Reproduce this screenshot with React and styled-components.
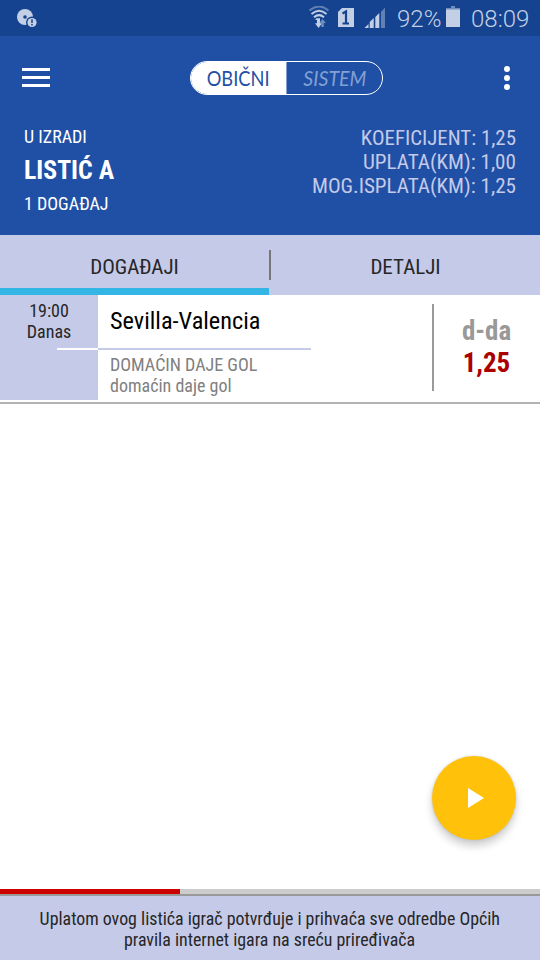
import React from "react";
import styled, { createGlobalStyle } from "styled-components";

const Global = createGlobalStyle`
  * { box-sizing: border-box; }
  body { margin: 0; background: #fff; }
`;

const Screen = styled.main`
  position: relative;
  display: flex;
  flex-direction: column;
  width: 540px;
  height: 960px;
  overflow: hidden;
  background: #fff;
  color: #262626;
  font-family: "Roboto Condensed", Roboto, sans-serif;
  font-stretch: 75%;
`;

const Text = styled.div`
  font-size: ${(p) => p.$size}px;
  line-height: ${(p) => p.$line}px;
  font-weight: ${(p) => p.$weight || 400};
  color: ${(p) => p.$color || "inherit"};
  white-space: nowrap;
  transform: ${(p) => (p.$fit ? `scaleX(${p.$fit})` : "none")};
  transform-origin: ${(p) => p.$origin || "left"} center;
`;

const StatusBar = styled.div`
  display: flex;
  align-items: center;
  height: 36px;
  padding: 0 12px 0 17px;
  background: #15438f;
  color: #c3cfe4;
  font-family: Roboto, sans-serif;
  font-stretch: 100%;
`;

const StatusIcons = styled.svg`
  display: block;
  flex: none;
  margin-left: ${(p) => p.$left || 0};
  margin-bottom: ${(p) => p.$lift || 0};
`;

const StatusText = styled.span`
  width: ${(p) => p.$width}px;
  margin-left: ${(p) => p.$gap}px;
  font-size: 24px;
  line-height: 36px;
  padding-top: 1px;
  font-weight: 300;
  white-space: nowrap;
`;

const Toolbar = styled.header`
  display: flex;
  align-items: center;
  justify-content: space-between;
  height: 83px;
  padding: 0 30px 0 22px;
  background: #1f50a5;
`;

const MenuButton = styled.button`
  display: flex;
  flex-direction: column;
  gap: 5px;
  width: 28px;
  padding: 0;
  border: 0;
  background: none;
`;

const MenuLine = styled.span`
  height: 3px;
  background: #fff;
`;

const MoreButton = styled(MenuButton)`
  width: 6px;
  gap: 3px;
`;

const MoreDot = styled.span`
  width: 6px;
  height: 6px;
  border-radius: 50%;
  background: #fff;
`;

const Toggle = styled.div`
  display: flex;
  width: 193px;
  height: 34px;
  margin-left: 19px;
  border: 1px solid #fff;
  border-radius: 17px;
  overflow: hidden;
`;

const ToggleOption = styled.div`
  display: flex;
  align-items: center;
  justify-content: center;
  width: ${(p) => (p.$active ? 95 : 96)}px;
  border-left: ${(p) => (p.$active ? "0" : "1px solid #83a0d2")};
  background: ${(p) => (p.$active ? "#fff" : "transparent")};
  color: ${(p) => (p.$active ? "#1f50a5" : "#83a0d2")};
  font-family: Lato, sans-serif;
  font-style: ${(p) => (p.$active ? "normal" : "italic")};
`;

const Summary = styled.section`
  display: flex;
  justify-content: space-between;
  height: 116px;
  padding: 7px 24px 0;
  background: #1f50a5;
  color: #fff;
`;

const SlipInfo = styled.div`
  display: grid;
  grid-template-rows: 28px 39px 22px;
`;

const Totals = styled.div`
  color: #c5cae9;
  text-align: right;
`;

const Tabs = styled.nav`
  display: grid;
  grid-template-columns: 269px 2px 269px;
  height: 60px;
  background: #c5cae9;
`;

const Tab = styled.div`
  display: flex;
  justify-content: center;
  padding-top: 17px;
  border-bottom: 7px solid ${(p) => (p.$active ? "#33b5e5" : "transparent")};
`;

const TabDivider = styled.div`
  height: 30px;
  margin-top: 15px;
  background: #777;
`;

const EventRow = styled.article`
  display: grid;
  grid-template-columns: 98px 334px 2px 106px;
  height: 109px;
  border-bottom: 2px solid #b3b3b3;
`;

const TimeCell = styled.div`
  display: flex;
  flex-direction: column;
  align-items: center;
  height: 105px;
  padding-top: 5px;
  background: #c5cae9;
`;

const Rule = styled.div`
  flex: none;
  align-self: ${(p) => (p.$light ? "flex-end" : "flex-start")};
  width: ${(p) => (p.$light ? 41 : 213)}px;
  height: 2px;
  margin-top: ${(p) => (p.$light ? 6 : 0)}px;
  background: ${(p) => (p.$light ? "#fff" : "#c5cae9")};
`;

const MatchCell = styled.div`
  display: flex;
  flex-direction: column;
`;

const MatchName = styled.div`
  height: 53px;
  padding: 11px 0 0 12px;
`;

const MatchBet = styled.div`
  padding: 4px 0 0 12px;
  color: #808080;
`;

const OddsDivider = styled.div`
  height: 87px;
  margin-top: 9px;
  background: #999;
`;

const Odds = styled.div`
  display: flex;
  flex-direction: column;
  align-items: center;
  padding: 20px 1px 0 0;
`;

const Spacer = styled.div`
  flex: 1;
`;

const Progress = styled.div`
  height: 7px;
  background: #ccc;
  border-bottom: 2px solid #999;
`;

const ProgressFill = styled.div`
  width: 180px;
  height: 5px;
  background: #c00;
`;

const Notice = styled.footer`
  display: flex;
  flex-direction: column;
  align-items: center;
  height: 64px;
  padding-top: 12px;
  background: #c5cae9;
`;

const PlayButton = styled.button`
  position: absolute;
  right: 24px;
  bottom: 120px;
  display: flex;
  align-items: center;
  justify-content: center;
  width: 84px;
  height: 84px;
  padding: 0 0 0 4px;
  border: 0;
  border-radius: 50%;
  background: #ffc10a;
  box-shadow: 0 6px 9px rgba(0, 0, 0, 0.2), 0 0 3px rgba(0, 0, 0, 0.14);
`;

function DiscAlert() {
  return (
    <StatusIcons width="22" height="20" viewBox="0 0 22 20">
      <circle cx="8" cy="9" r="8" fill="#c3cfe4" />
      <circle cx="8" cy="9" r="1.8" fill="#15438f" />
      <circle cx="15" cy="14.5" r="6" fill="#15438f" />
      <circle cx="15" cy="14.5" r="4.6" fill="#c3cfe4" />
      <path d="M15 11.3v3.6M15 16v1.6" stroke="#15438f" strokeWidth="1.5" />
    </StatusIcons>
  );
}

function SignalIcons() {
  return (
    <StatusIcons $left="auto" width="78" height="24" viewBox="309 6 78 24">
      <g fill="none" strokeWidth="2">
        <path d="M309.5 10.5Q319 2.5 328.500 10.5" stroke="#5f80b5" />
        <path d="M311.500 14Q319 7.500 326.500 14M314 17.300Q319 13 324 17.300" stroke="#c3cfe4" />
      </g>
      <path d="M315.200 20l1.300-1.700h3.500v5h2l-3.500 4.700-3.500-4.700h2v-3.300z" fill="#c3cfe4" />
      <path d="M322.500 19l3.500 4h-2.200v4h-2.500v-4h-2z" fill="#6f8dbd" />
      <path d="M338 12l4-4h12v19h-16z" fill="#c3cfe4" />
      <path d="M342.500 13.500l3.500-2v12m-3.500 0h6.500" fill="none" stroke="#15438f" strokeWidth="2.200" />
      <path d="M364.500 28l4-4v4zM369.700 28v-6l4-4v10zM375.300 28V17l4-4v15z" fill="#c3cfe4" />
      <path d="M381 28V12l4-4.500V28z" fill="#6180b4" />
    </StatusIcons>
  );
}

function Battery() {
  return (
    <StatusIcons $left="6px" $lift="3px" width="14" height="21" viewBox="0 0 14 21">
      <path d="M5 0h4v2h5v2H0V2h5z" fill="#6f8dbd" />
      <path d="M0 3.500h14v17.500H0z" fill="#c3cfe4" />
    </StatusIcons>
  );
}

export default function App() {
  return (
    <Screen>
      <Global />
      <StatusBar>
        <DiscAlert />
        <SignalIcons />
        <StatusText $width={43} $gap={10}>92%</StatusText>
        <Battery />
        <StatusText $width={57} $gap={11}>08:09</StatusText>
      </StatusBar>
      <Toolbar>
        <MenuButton aria-label="Menu">
          <MenuLine />
          <MenuLine />
          <MenuLine />
        </MenuButton>
        <Toggle>
          <ToggleOption $active>
            <Text $size={21} $line={32} $origin="center" $fit={0.87}>OBIČNI</Text>
          </ToggleOption>
          <ToggleOption>
            <Text $size={21} $line={32} $origin="center" $fit={0.93}>SISTEM</Text>
          </ToggleOption>
        </Toggle>
        <MoreButton aria-label="More">
          <MoreDot />
          <MoreDot />
          <MoreDot />
        </MoreButton>
      </Toolbar>
      <Summary>
        <SlipInfo>
          <Text $size={18} $line={22}>U IZRADI</Text>
          <Text $size={26} $line={32} $weight={700} $fit={0.99}>LISTIĆ A</Text>
          <Text $size={18} $line={22}>1 DOGAĐAJ</Text>
        </SlipInfo>
        <Totals>
          <Text $size={21} $line={24} $origin="right" $fit={0.995}>KOEFICIJENT: 1,25</Text>
          <Text $size={21} $line={24} $origin="right" $fit={1.005}>UPLATA(KM): 1,00</Text>
          <Text $size={21} $line={24} $origin="right" $fit={1.005}>MOG.ISPLATA(KM): 1,25</Text>
        </Totals>
      </Summary>
      <Tabs>
        <Tab $active>
          <Text $size={21} $line={30} $origin="center">DOGAĐAJI</Text>
        </Tab>
        <TabDivider />
        <Tab>
          <Text $size={21} $line={30} $origin="center">DETALJI</Text>
        </Tab>
      </Tabs>
      <EventRow>
        <TimeCell>
          <Text $size={18} $line={21} $origin="center">19:00</Text>
          <Text $size={18} $line={21} $origin="center">Danas</Text>
          <Rule $light />
        </TimeCell>
        <MatchCell>
          <MatchName>
            <Text $size={24} $line={30} $color="#000" $fit={1.012}>Sevilla-Valencia</Text>
          </MatchName>
          <Rule />
          <MatchBet>
            <Text $size={18} $line={21}>DOMAĆIN DAJE GOL</Text>
            <Text $size={18} $line={21}>domaćin daje gol</Text>
          </MatchBet>
        </MatchCell>
        <OddsDivider />
        <Odds>
          <Text $size={27} $line={32} $weight={700} $color="#999">d-da</Text>
          <Text $size={27} $line={32} $weight={700} $color="#a00">1,25</Text>
        </Odds>
      </EventRow>
      <Spacer />
      <Progress>
        <ProgressFill />
      </Progress>
      <Notice>
        <Text $size={18} $line={21} $origin="center" $fit={0.993}>Uplatom ovog listića igrač potvrđuje i prihvaća sve odredbe Općih</Text>
        <Text $size={18} $line={21} $origin="center" $fit={0.993}>pravila internet igara na sreću priređivača</Text>
      </Notice>
      <PlayButton aria-label="Play">
        <svg width="16" height="20" viewBox="0 0 16 20">
          <path d="M0 0l16 10L0 20z" fill="#fff" />
        </svg>
      </PlayButton>
    </Screen>
  );
}
